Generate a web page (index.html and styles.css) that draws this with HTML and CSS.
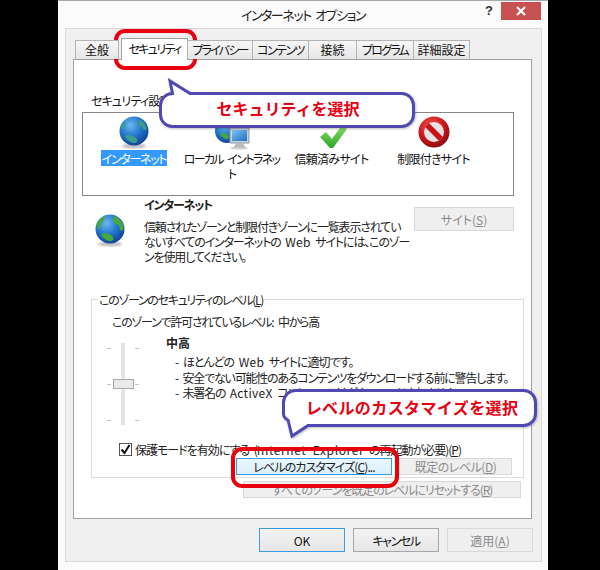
FILE: index.html
```html
<!DOCTYPE html>
<html lang="ja">
<head>
<meta charset="utf-8">
<title>インターネット オプション</title>
<link rel="stylesheet" href="styles.css">
</head>
<body>
<svg class="defs" aria-hidden="true">
  <defs>
    <radialGradient id="sea" cx="38%" cy="30%" r="75%">
      <stop offset="0" stop-color="#6db9ee"/>
      <stop offset=".5" stop-color="#2378cf"/>
      <stop offset="1" stop-color="#0e3f93"/>
    </radialGradient>
    <radialGradient id="redball" cx="40%" cy="30%" r="75%">
      <stop offset="0" stop-color="#f2534f"/>
      <stop offset=".6" stop-color="#c81418"/>
      <stop offset="1" stop-color="#860b0e"/>
    </radialGradient>
    <linearGradient id="tick" x1="0" y1="0" x2="0" y2="1">
      <stop offset="0" stop-color="#8fe06a"/>
      <stop offset="1" stop-color="#2aa52a"/>
    </linearGradient>
    <linearGradient id="screen" x1="0" y1="0" x2="1" y2="1">
      <stop offset="0" stop-color="#7cc4f0"/>
      <stop offset="1" stop-color="#1f6fc4"/>
    </linearGradient>
    <filter id="soft"><feGaussianBlur stdDeviation="1.2"/></filter>
    <symbol id="globe-teal" viewBox="0 0 32 34">
      <ellipse cx="16" cy="30" rx="12" ry="2.5" fill="#888" opacity=".55" filter="url(#soft)"/>
      <circle cx="16" cy="15" r="14.5" fill="url(#sea)"/>
      <path d="M21 3.5c3 1 6 4 7.5 8l-.5 3-3-1-1-3-3 0-1-3zM7 20c3-2 8-1 11 2s1 5-2 5-8-3-9-7zM3 10c1-2 3-4 4-4l1 3-2 3-2 2z" fill="#3d9a8e"/>
    </symbol>
    <symbol id="globe-green" viewBox="0 0 32 34">
      <ellipse cx="16" cy="30" rx="12" ry="2.5" fill="#888" opacity=".55" filter="url(#soft)"/>
      <circle cx="16" cy="15" r="14.5" fill="url(#sea)"/>
      <path d="M20 2c4 1 8 5 9.500 10l-.5 5-3-1-1-5-4-1-2-4zM7 20c3-2 8-1 11 2s1 5-2 5-8-3-9-7zM3 9c1-2 5-6 8-7l-1 4-3 3-1 5-3 1z" fill="#46a83a"/>
    </symbol>
  </defs>
</svg>

<main class="window">
  <header class="titlebar">
    <span></span>
    <h1 class="title">インターネット オプション</h1>
    <div class="caption">
      <span class="help">?</span>
      <span class="close" aria-label="閉じる">
        <svg width="10" height="10" viewBox="0 0 10 10"><path d="M1 1l8 8M9 1l-8 8" stroke="#fff" stroke-width="2.200" fill="none"/></svg>
      </span>
    </div>
  </header>

  <div class="frame">
    <nav class="tabs">
      <span class="tab tab-general">全般</span>
      <span class="tab tab-security is-active">セキュリティ</span>
      <span class="tab tab-privacy">プライバシー</span>
      <span class="tab tab-content">コンテンツ</span>
      <span class="tab tab-connect">接続</span>
      <span class="tab tab-program">プログラム</span>
      <span class="tab tab-advanced">詳細設定</span>
    </nav>

    <section class="sheet">
      <p class="zones-label">セキュリティ設定</p>

      <div class="zones">
        <div class="zone">
          <svg class="zone-icon" width="32" height="34"><use href="#globe-teal"/></svg>
          <span class="zone-name zone-kata is-selected">インターネット</span>
        </div>
        <div class="zone">
          <svg class="zone-icon" width="36" height="34" viewBox="0 0 36 34">
            <circle cx="13" cy="15" r="12" fill="url(#sea)"/>
            <path d="M6 18c3-2 6-1 8 1s0 5-2 4-5-2-6-5z" fill="#46a83a"/>
            <path d="M16 12h19v15H16z" fill="#c9d2da" stroke="#8b97a3"/>
            <path d="M18 14h15v11H18z" fill="url(#screen)"/>
            <path d="M22 27h7l2 4H20z" fill="#b5bcc4"/>
            <ellipse cx="25" cy="32" rx="9" ry="1.500" fill="#aaa" opacity=".6"/>
          </svg>
          <span class="zone-name zone-kata zone-long">ローカル イントラネッ<br>ト</span>
        </div>
        <div class="zone">
          <svg class="zone-icon" width="32" height="34" viewBox="0 0 32 34">
            <path d="M4 21l6-5 6 7L26 9l5 4-14 19h-3z" fill="url(#tick)"/>
          </svg>
          <span class="zone-name">信頼済みサイト</span>
        </div>
        <div class="zone">
          <svg class="zone-icon" width="32" height="34" viewBox="0 0 32 34">
            <circle cx="16" cy="16" r="15.500" fill="url(#redball)"/>
            <circle cx="16" cy="16" r="10" fill="#e9e2e2"/>
            <path d="M9 9l14 14" stroke="#c81418" stroke-width="5.500"/>
          </svg>
          <span class="zone-name">制限付きサイト</span>
        </div>
      </div>

      <div class="info">
        <svg class="info-icon" width="32" height="34"><use href="#globe-green"/></svg>
        <div class="info-text">
          <h2 class="info-title">インターネット</h2>
          <p class="info-desc">信頼されたゾーンと制限付きゾーンに一覧表示されてい<br>ないすべてのインターネットの <span class="lat">Web</span> サイトには、このゾー<br>ンを使用してください。</p>
        </div>
        <span class="btn btn-disabled btn-site">サイト(<u>S</u>)</span>
      </div>

      <fieldset class="level">
        <legend class="level-legend">このゾーンのセキュリティのレベル(<u>L</u>)</legend>
        <p class="allowed">このゾーンで許可されているレベル: 中から高</p>
        <div class="level-body">
          <div class="slider">
            <div class="ticks"><i></i><i></i><i></i></div>
            <div class="track"></div>
            <div class="ticks"><i></i><i></i><i></i></div>
            <div class="thumb"></div>
          </div>
          <div class="level-desc">
            <h3 class="level-name">中高</h3>
            <ul class="bullets">
              <li class="bullet-short">- ほとんどの <span class="lat">Web</span> サイトに適切です。</li>
              <li>- 安全でない可能性のあるコンテンツをダウンロードする前に警告します。</li>
              <li>- 未署名の <span class="lat">ActiveX</span> コントロールはダウンロードされません。</li>
            </ul>
          </div>
        </div>
        <label class="protect">
          <span class="check"><svg width="11" height="11" viewBox="0 0 11 11"><path d="M1.500 5.500l3 3.500 5-8" stroke="#111" stroke-width="2" fill="none"/></svg></span>
          <span>保護モードを有効にする (<span class="lat lat-wide">Internet Explorer</span> の再起動が必要)(<u>P</u>)</span>
        </label>
        <div class="level-buttons">
          <span class="btn btn-hot btn-custom">レベルのカスタマイズ(<u>C</u>)...</span>
          <span class="btn btn-disabled btn-default">既定のレベル(<u>D</u>)</span>
        </div>
      </fieldset>

      <div class="reset-row">
        <span class="btn btn-disabled btn-reset">すべてのゾーンを既定のレベルにリセットする(<u>R</u>)</span>
      </div>
    </section>

    <footer class="actions">
      <span class="btn btn-action btn-primary">OK</span>
      <span class="btn btn-action btn-normal btn-cancel">キャンセル</span>
      <span class="btn btn-action btn-disabled">適用(<u>A</u>)</span>
    </footer>
  </div>
</main>

<div class="mark mark-tab"></div>
<div class="mark mark-custom"></div>

<div class="callout callout-top">
  <svg class="bubble" width="260" height="52" viewBox="0 0 260 52">
    <path d="M14.500 15.500L12 3l20 12.500h211.500a12 12 0 0 1 12 12v9a12 12 0 0 1-12 12h-229a12 12 0 0 1-12-12v-9a12 12 0 0 1 12-12z"/>
  </svg>
  <span class="callout-text">セキュリティを選択</span>
</div>
<div class="callout callout-bottom">
  <svg class="bubble" width="260" height="54" viewBox="0 0 260 54">
    <path d="M15.500 4.500h228a12 12 0 0 1 12 12v11a12 12 0 0 1-12 12H28L12 50l-4-16q-4.500-2-4.500-6.500v-11a12 12 0 0 1 12-12z"/>
  </svg>
  <span class="callout-text callout-text-wide">レベルのカスタマイズを選択</span>
</div>
</body>
</html>
```
FILE: styles.css
```css
* { box-sizing: border-box; }

html, body { margin: 0; padding: 0; }

body {
  position: relative;
  width: 600px;
  height: 570px;
  overflow: hidden;
  background: #000;
  color: #111;
  font: 12px/15px "Noto Sans CJK JP", "Noto Sans", sans-serif;
  font-feature-settings: "palt";
  word-spacing: 3px;
}

.defs { position: absolute; width: 0; height: 0; }

h1, h2, h3, p, ul { margin: 0; padding: 0; font-size: inherit; font-weight: 400; }
ul { list-style: none; }
u { text-decoration: underline; }

.lat { letter-spacing: .3px; }
.lat-wide { letter-spacing: .6px; }

.window {
  width: 490px;
  height: 570px;
  margin-left: 58px;
  padding-top: 1px;
  background: #fbfbfb;
  border-top: 1px solid #a8a8a8;
  display: flex;
  flex-direction: column;
}

.titlebar {
  height: 26px;
  display: grid;
  grid-template-columns: 1fr auto 1fr;
  flex: none;
}

.title { font-size: 13px; line-height: 26px; color: #222; letter-spacing: -1.450px; }

.caption {
  display: flex;
  justify-content: flex-end;
  align-items: flex-start;
  padding-right: 7px;
}

.help { font: 700 13px/18px "Liberation Sans", sans-serif; margin-right: 8px; color: #333; }

.close {
  width: 40px;
  height: 18px;
  background: #c75050;
  display: flex;
  align-items: center;
  justify-content: center;
}

.frame {
  flex: none;
  height: 534px;
  margin: 0 6px 0 7px;
  padding: 9px 9px 0 7px;
  background: #f0f0f0;
  border: 1px solid #d9d9d9;
  display: flex;
  flex-direction: column;
}

.tabs {
  display: flex;
  align-items: flex-end;
  height: 22px;
  margin-bottom: -1px;
  padding-left: 2px;
  position: relative;
  z-index: 1;
  flex: none;
}

.tab {
  height: 19px;
  margin-bottom: 1px;
  border: 1px solid #b4b4b4;
  border-bottom: 0;
  margin-right: -1px;
  background: linear-gradient(#f6f6f6, #e6e6e6);
  text-align: center;
  line-height: 17px;
  white-space: nowrap;
  flex: none;
}

.tab-general { width: 44px; margin-right: 2px; }
.tab-security { width: 67px; letter-spacing: -1.700px; }
.tab-privacy { width: 66px; letter-spacing: -1.800px; }
.tab-content { width: 57px; letter-spacing: -1.600px; }
.tab-connect { width: 49px; }
.tab-program { width: 58px; letter-spacing: -1.800px; }
.tab-advanced { width: 57px; }

.tab.is-active {
  height: 22px;
  margin-bottom: 0;
  background: #fff;
  line-height: 20px;
  border-color: #a0a0a0;
}

.sheet {
  flex: none;
  height: 460px;
  background: #fff;
  border: 1px solid #a0a0a0;
  padding: 33px 7px 0 8px;
}

.zones-label {
  padding-left: 9px;
  height: 19px;
  white-space: nowrap;
  letter-spacing: -.8px;
}

.zones {
  width: 432px;
  height: 84px;
  border: 1px solid #828790;
  display: grid;
  grid-template-columns: 98px 97px 103px 101px;
  padding: 3px 0 0 2px;
}

.zone {
  display: flex;
  flex-direction: column;
  align-items: center;
  text-align: center;
}

.zone-icon { flex: none; }

.zone-name {
  margin-top: 1px;
  letter-spacing: -.7px;
  white-space: nowrap;
}

.zone-kata { letter-spacing: -1.300px; }
.zone-long { letter-spacing: -1.600px; }

.zone-name.is-selected { background: #3399ff; color: #fff; padding: 0 1px; height: 16px; margin-top: 0; line-height: 17px; }

.info {
  display: flex;
  align-items: flex-start;
  height: 96px;
  padding: 1px 0 0 12px;
}

.info-icon { margin-top: 17px; flex: none; }

.info-text { width: 262px; margin-left: 18px; flex: none; white-space: nowrap; }

.info-title { font-weight: 700; color: #222; margin-bottom: 7px; letter-spacing: -1.200px; }
.info-desc { color: #222; letter-spacing: -1.150px; }

.btn {
  display: flex;
  align-items: center;
  justify-content: center;
  white-space: nowrap;
  border: 1px solid #adadad;
  flex: none;
}

.btn-disabled { background: #efefef; border-color: #d9d9d9; color: #8a8a8a; }

.btn-site { width: 100px; height: 24px; margin-left: 8px; margin-top: 10px; }

.level {
  width: 433px;
  height: 186px;
  margin: 0 0 0 9px;
  padding: 0 0 0 20px;
  border: 1px solid #dcdcdc;
  min-width: 0;
}

.level-legend {
  padding: 0 1px;
  margin-left: -14px;
  color: #222;
  line-height: 15px;
  letter-spacing: -1.300px;
}

.allowed { margin-top: 7px; color: #222; letter-spacing: -1.250px; white-space: nowrap; }

.level-body { display: flex; margin-top: 6px; height: 107px; }

.slider {
  position: relative;
  flex: none;
  width: 32px;
  height: 82px;
  margin: 8px 0 0 -5px;
  display: flex;
  justify-content: center;
  gap: 10px;
}

.track { width: 4px; height: 82px; background: #e3e3e3; }

.ticks {
  width: 5px;
  height: 73px;
  margin-top: 5px;
  display: flex;
  flex-direction: column;
  justify-content: space-between;
}

.ticks i { display: block; height: 1px; background: #c4c4c4; }

.thumb {
  position: absolute;
  left: 6px;
  top: 36px;
  width: 21px;
  height: 10px;
  background: #eaeaea;
  border: 1px solid #a8a8a8;
}

.level-desc { margin-left: 27px; }

.level-name { font-weight: 700; color: #222; margin-bottom: 4px; }

.bullets { margin-left: 9px; white-space: nowrap; color: #222; letter-spacing: -1.200px; }
.bullets li { height: 15.500px; }
.bullets .bullet-short { letter-spacing: -1px; }

.protect {
  display: flex;
  align-items: center;
  gap: 3px;
  margin-left: 7px;
  height: 15px;
  white-space: nowrap;
  color: #222;
  letter-spacing: -1px;
}

.check {
  width: 13px;
  height: 13px;
  background: #fff;
  border: 1px solid #555;
  display: flex;
  align-items: center;
  justify-content: center;
}

.level-buttons { display: flex; margin-top: 1px; margin-left: 124px; gap: 7px; }

.btn-hot {
  background: linear-gradient(#eaf6fd, #d9f0fc);
  border-color: #3c9be0;
  color: #222;
}

.btn-custom { width: 156px; height: 17px; letter-spacing: -.9px; }
.btn-default { width: 113px; height: 17px; letter-spacing: -.5px; }

.reset-row { padding: 3px 0 0 161px; }
.btn-reset { width: 278px; height: 17px; letter-spacing: -1.100px; }

.actions {
  display: flex;
  justify-content: flex-end;
  gap: 8px;
  padding: 9px 0 0;
  margin-right: -1px;
}

.btn-action { width: 86px; height: 24px; }
.btn-cancel { letter-spacing: -1.400px; }

.btn-primary { background: linear-gradient(#f3f3f3, #e6e6e6); border: 1px solid #3c9be0; }
.btn-normal { background: linear-gradient(#f3f3f3, #e6e6e6); border-color: #a6a6a6; }

.mark {
  position: absolute;
  border: 4px solid #e8000f;
  border-radius: 11px;
}

.mark-tab { left: 114px; top: 29px; width: 83px; height: 41px; }
.mark-custom { left: 231px; top: 447px; width: 168px; height: 41px; }

.callout {
  position: absolute;
  display: flex;
  justify-content: center;
  width: 260px;
}

.callout-top { left: 158px; top: 78px; height: 52px; padding-top: 21px; }
.callout-bottom { left: 280px; top: 386px; height: 54px; padding: 12px 0 0 4px; }

.bubble {
  position: absolute;
  left: 0;
  top: 0;
  filter: drop-shadow(1px 1px 1px rgba(0, 0, 0, .25));
}

.bubble path { fill: #fff; stroke: #4f49b4; stroke-width: 3; }

.callout-text {
  position: relative;
  color: #e60012;
  font-size: 16px;
  line-height: 18px;
  font-weight: 700;
  font-feature-settings: normal;
  white-space: nowrap;
}

.callout-text-wide { letter-spacing: .4px; }
```
